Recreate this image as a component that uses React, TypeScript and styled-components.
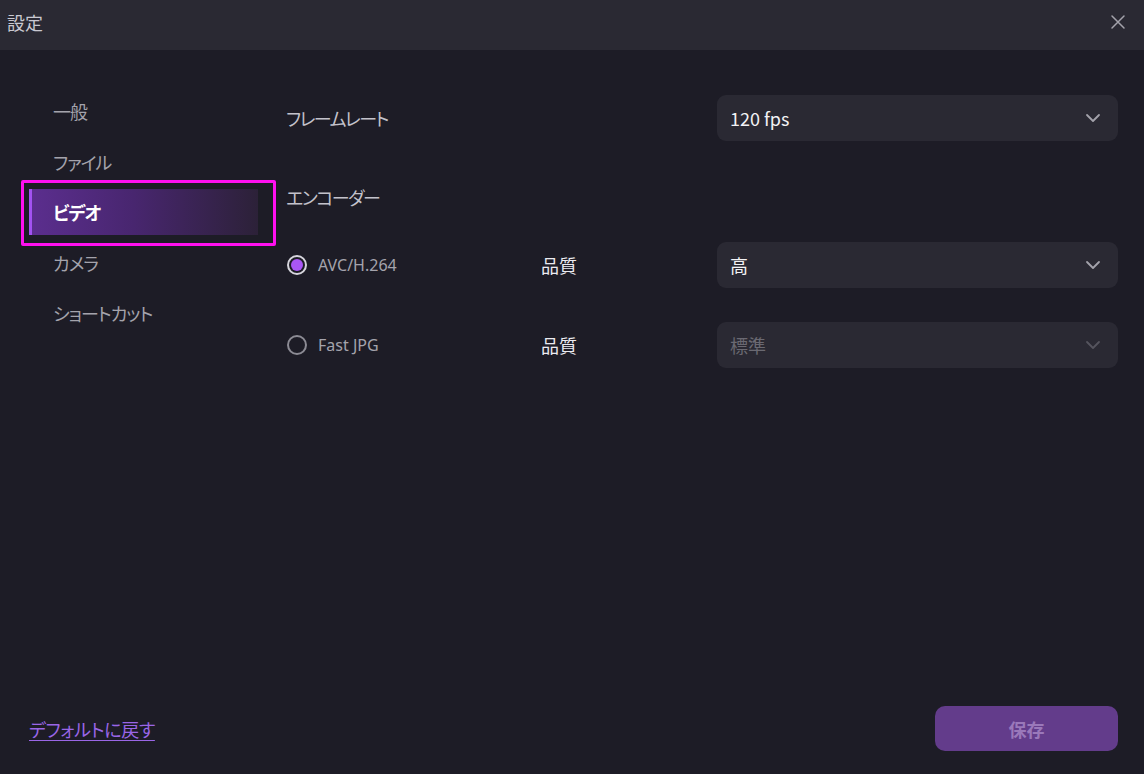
import React, { useState } from 'react';
import styled, { createGlobalStyle } from 'styled-components';

const GlobalStyle = createGlobalStyle`
  html, body {
    margin: 0;
    padding: 0;
    background: #1d1c26;
  }
  body {
    font-family: "Noto Sans CJK JP", "Noto Sans", sans-serif;
    font-feature-settings: "palt";
  }
`;

const menu = ['一般', 'ファイル', 'ビデオ', 'カメラ', 'ショートカット'];

function Chevron({ dim }: { dim?: boolean }) {
  return (
    <svg width="16" height="10" viewBox="0 0 16 10">
      <path
        d="M2 2 L8 8 L14 2"
        fill="none"
        stroke={dim ? '#55545e' : '#a3a2ab'}
        strokeWidth="1.8"
        strokeLinecap="round"
        strokeLinejoin="round"
      />
    </svg>
  );
}

function App() {
  const [active, setActive] = useState(2);
  const [encoder, setEncoder] = useState('avc');

  return (
    <Window>
      <GlobalStyle />
      <TitleBar>
        <Title>設定</Title>
        <CloseButton aria-label="close">
          <svg width="16" height="16" viewBox="0 0 16 16">
            <path d="M2 2 L14 14 M14 2 L2 14" stroke="#a3a2ab" strokeWidth="1.5" strokeLinecap="round" />
          </svg>
        </CloseButton>
      </TitleBar>

      <Body>
        <Main>
          <Sidebar>
            {menu.map((label, i) => (
              <MenuItem key={label} $active={i === active} onClick={() => setActive(i)}>
                {label}
                {i === active && <Highlight />}
              </MenuItem>
            ))}
          </Sidebar>

          <Content>
            <Row>
              <Label $span>フレームレート</Label>
              <Select>
                <SelectText>120 fps</SelectText>
                <Chevron />
              </Select>
            </Row>

            <Row $top={33}>
              <Label $span>エンコーダー</Label>
            </Row>

            <Row $top={22}>
              <RadioLabel onClick={() => setEncoder('avc')}>
                <Radio $checked={encoder === 'avc'} />
                AVC/H.264
              </RadioLabel>
              <Quality>品質</Quality>
              <Select>
                <SelectText>高</SelectText>
                <Chevron />
              </Select>
            </Row>

            <Row $top={34}>
              <RadioLabel onClick={() => setEncoder('jpg')}>
                <Radio $checked={encoder === 'jpg'} />
                Fast JPG
              </RadioLabel>
              <Quality>品質</Quality>
              <Select $disabled>
                <SelectText $disabled>標準</SelectText>
                <Chevron dim />
              </Select>
            </Row>
          </Content>
        </Main>

        <Footer>
          <ResetLink href="#">デフォルトに戻す</ResetLink>
          <SaveButton>保存</SaveButton>
        </Footer>
      </Body>
    </Window>
  );
}

const Window = styled.div`
  width: 1144px;
  height: 774px;
  display: flex;
  flex-direction: column;
  background: #1d1c26;
  overflow: hidden;
`;

const TitleBar = styled.header`
  height: 50px;
  flex-shrink: 0;
  display: flex;
  align-items: center;
  justify-content: space-between;
  padding: 0 18px 6px 7px;
  box-sizing: border-box;
  background: #2a2933;
`;

const Title = styled.div`
  font-size: 18px;
  color: #c9c8d1;
`;

const CloseButton = styled.button`
  border: none;
  background: none;
  padding: 0;
  display: flex;
  cursor: pointer;
`;

const Body = styled.div`
  flex: 1;
  display: flex;
  flex-direction: column;
`;

const Main = styled.div`
  flex: 1;
  display: flex;
`;

const Sidebar = styled.nav`
  width: 229px;
  margin-left: 29px;
  padding-top: 38px;
  display: flex;
  flex-direction: column;
  gap: 4.5px;
`;

const MenuItem = styled.div<{ $active?: boolean }>`
  position: relative;
  height: 46px;
  display: flex;
  align-items: center;
  font-size: 18px;
  letter-spacing: -1px;
  cursor: pointer;
  color: ${(p) => (p.$active ? '#ffffff' : '#a4a3ac')};
  font-weight: ${(p) => (p.$active ? 700 : 400)};
  background: ${(p) =>
    p.$active ? 'linear-gradient(90deg, #5b2e8e 0%, #48266f 45%, #2c2138 100%)' : 'transparent'};
  border-left: 3px solid ${(p) => (p.$active ? '#a252f2' : 'transparent')};
  padding-left: 21px;
`;

const Highlight = styled.span`
  position: absolute;
  left: -11px;
  top: -9px;
  width: 255px;
  height: 66px;
  border: 3px solid #ff10f0;
  border-radius: 2px;
  box-sizing: border-box;
  pointer-events: none;
`;

const Content = styled.section`
  flex: 1;
  margin-left: 28px;
  margin-right: 26px;
  padding-top: 45px;
  display: flex;
  flex-direction: column;
`;

const Row = styled.div<{ $top?: number }>`
  display: grid;
  grid-template-columns: 255px 176px 1fr;
  align-items: center;
  height: 46px;
  margin-top: ${(p) => p.$top ?? 0}px;
`;

const Label = styled.div<{ $span?: boolean }>`
  grid-column: ${(p) => (p.$span ? '1 / 3' : 'auto')};
  font-size: 18px;
  letter-spacing: -1.5px;
  color: #c3c2cb;
`;

const RadioLabel = styled.label`
  display: flex;
  align-items: center;
  gap: 11px;
  font-size: 16px;
  color: #a4a3ac;
  cursor: pointer;
  font-family: "Noto Sans", sans-serif;
`;

const Radio = styled.span<{ $checked?: boolean }>`
  width: 20px;
  height: 20px;
  box-sizing: border-box;
  border-radius: 50%;
  border: 2px solid ${(p) => (p.$checked ? '#d6d5dc' : '#8c8b94')};
  display: flex;
  align-items: center;
  justify-content: center;
  margin-left: 1px;

  &::after {
    content: '';
    width: 12px;
    height: 12px;
    border-radius: 50%;
    background: ${(p) => (p.$checked ? '#a956f5' : 'transparent')};
  }
`;

const Quality = styled.div`
  font-size: 18px;
  color: #ecebf1;
`;

const Select = styled.div<{ $disabled?: boolean }>`
  height: 46px;
  box-sizing: border-box;
  display: flex;
  align-items: center;
  justify-content: space-between;
  padding: 0 17px 0 13px;
  border-radius: 9px;
  background: #2a2933;
  cursor: ${(p) => (p.$disabled ? 'default' : 'pointer')};
`;

const SelectText = styled.span<{ $disabled?: boolean }>`
  font-size: 18px;
  color: ${(p) => (p.$disabled ? '#6a6972' : '#f2f2f5')};
`;

const Footer = styled.footer`
  display: flex;
  align-items: center;
  justify-content: space-between;
  padding: 0 26px 23px 29px;
`;

const ResetLink = styled.a`
  font-size: 18px;
  letter-spacing: -0.3px;
  color: #9a66e6;
  text-decoration: underline;
  text-underline-offset: 3px;
`;

const SaveButton = styled.button`
  width: 183px;
  height: 45px;
  border: none;
  border-radius: 10px;
  background: #633c8b;
  color: #9a78ba;
  font-family: "Noto Sans CJK JP", sans-serif;
  font-size: 18px;
  font-weight: 700;
  cursor: pointer;
`;

export default App;
